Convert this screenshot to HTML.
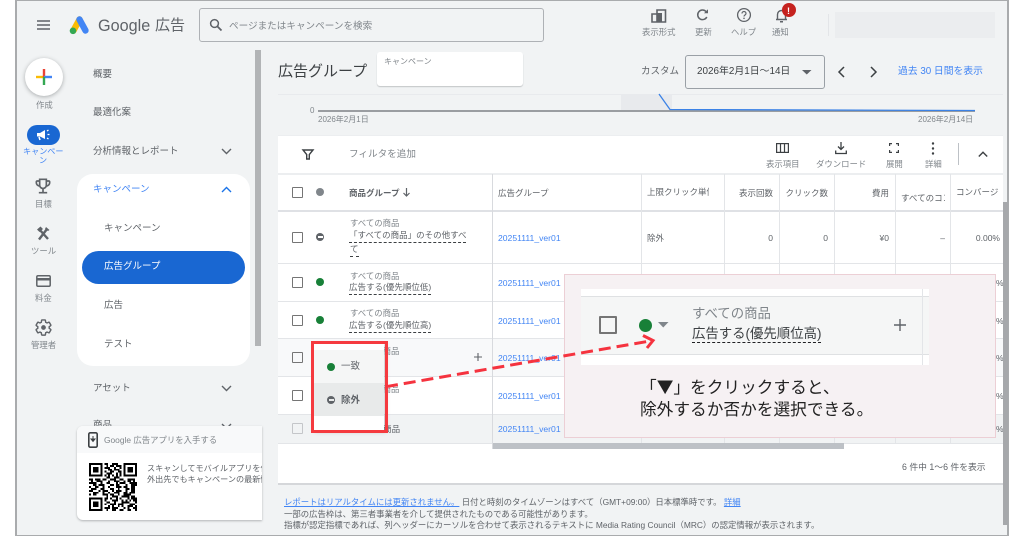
<!DOCTYPE html>
<html lang="ja"><head><meta charset="utf-8"><title>広告グループ</title>
<style>
html,body{margin:0;padding:0;background:#fff}
#r{position:relative;width:1024px;height:536px;overflow:hidden;background:#fff;font-family:"Liberation Sans","Noto Sans CJK JP",sans-serif;color:#5f6368;filter:blur(.3px)}
.t{position:absolute;white-space:nowrap;line-height:0;font-size:9.5px;margin-top:1px}
.b{position:absolute}
.s{font-size:8.4px;color:#80868b}
.l{color:#4285f4;font-size:8.6px;left:498px}
.cb{position:absolute;left:292px;width:9px;height:9px;border:1.5px solid #757575;border-radius:1px}
.d{position:absolute;left:316px;width:8px;height:8px;border-radius:50%;background:#188038}
.v{position:absolute;width:1px;background:#e3e5e8}
.h{position:absolute;left:278px;width:725px;height:1px;background:#e3e5e8}
.u{border-bottom:1px dashed #3c4043;padding-bottom:1px;line-height:11px;display:inline-block}
svg{position:absolute;overflow:visible}
</style></head><body><div id="r">
<!-- frame -->
<div class="b" style="left:16px;top:1px;width:991px;height:534px;background:#f1f3f4"></div>
<div class="b" style="left:15px;top:0;width:1.5px;height:536px;background:#a9abad"></div>
<div class="b" style="left:15px;top:0;width:993px;height:1px;background:#a9abad"></div>
<div class="b" style="left:15px;top:535px;width:993px;height:1px;background:#a9abad"></div>
<div class="b" style="left:1007px;top:0;width:1.5px;height:536px;background:#a9abad"></div>

<!-- top bar -->
<svg style="left:37px;top:20px" width="13" height="10"><path d="M0 1h13M0 5h13M0 9h13" stroke="#5f6368" stroke-width="1.4"/></svg>
<svg style="left:69px;top:15px" width="21" height="20"><path d="M4.500 15.500 10.500 4.500" stroke="#fbbc04" stroke-width="6.400" stroke-linecap="round"/><path d="M10.500 4.500 16.500 15.500" stroke="#4285f4" stroke-width="6.400" stroke-linecap="round"/><circle cx="4" cy="15.800" r="3.300" fill="#34a853"/></svg>
<div class="t" style="left:98px;top:24.500px;font-size:16.200px">Google</div>
<div class="t" style="left:155px;top:25px;font-size:15px">広告</div>
<div class="b" style="left:199px;top:8px;width:343px;height:32px;border:1px solid #aeb1b5;border-radius:3px"></div>
<svg style="left:209px;top:18px" width="14" height="14"><circle cx="5.500" cy="5.500" r="3.900" fill="none" stroke="#5f6368" stroke-width="1.500"/><path d="M8.500 8.500 12.500 12.500" stroke="#5f6368" stroke-width="1.800"/></svg>
<div class="t" style="left:229px;top:26px;font-size:9.600px;color:#80868b">ページまたはキャンペーンを検索</div>

<svg style="left:651px;top:8px" width="16" height="15"><path d="M1 6h5v8H1zM6 2h8.500v12H6z" fill="none" stroke="#5f6368" stroke-width="1.600"/><path d="M6 5h5v9H6z" fill="#5f6368"/></svg>
<svg style="left:697px;top:9px" width="12" height="12"><path d="M9.800 8A4.800 4.800 0 1 1 9 2.500" fill="none" stroke="#5f6368" stroke-width="1.500"/><path d="M7 4.200h4V.2z" fill="#5f6368"/></svg>
<svg style="left:737px;top:8px" width="14" height="14"><circle cx="7" cy="7" r="6.400" fill="none" stroke="#5f6368" stroke-width="1.300"/><path d="M5 5.500A2 2 0 0 1 9 5.500C9 7 7 7 7 8.500" fill="none" stroke="#5f6368" stroke-width="1.200"/><circle cx="7" cy="10.300" r=".8" fill="#5f6368"/></svg>
<svg style="left:775px;top:8px" width="13" height="15"><path d="M2.500 11V6.500A4 4 0 0 1 10.500 6.500V11M1 11.500h11" fill="none" stroke="#5f6368" stroke-width="1.400"/><path d="M5 13h3v1.500H5z" fill="#5f6368"/></svg>
<div class="b" style="left:782px;top:3px;width:14px;height:14px;border-radius:50%;background:#c5221f"></div>
<div class="t" style="left:787px;top:9.500px;font-size:9px;font-weight:bold;color:#fff">!</div>
<div class="t s" style="left:642px;top:30.500px">表示形式</div>
<div class="t s" style="left:695px;top:30.500px">更新</div>
<div class="t s" style="left:731px;top:30.500px">ヘルプ</div>
<div class="t s" style="left:772px;top:30.500px">通知</div>
<div class="b" style="left:828px;top:14px;width:1px;height:22px;background:#e3e5e8"></div>
<div class="b" style="left:835px;top:12px;width:160px;height:26px;background:#ebedef"></div>

<!-- left rail -->
<div class="b" style="left:25px;top:58px;width:38px;height:38px;border-radius:50%;background:#fff;box-shadow:0 1px 4px rgba(60,64,67,.4)"></div>
<svg style="left:35px;top:68px" width="18" height="18"><path d="M9 9H1" stroke="#fbbc04" stroke-width="2.400"/><path d="M9 1V9" stroke="#ea4335" stroke-width="2.400"/><path d="M9 9h8" stroke="#4285f4" stroke-width="2.400"/><path d="M9 9v8" stroke="#34a853" stroke-width="2.400"/></svg>
<div class="t s" style="left:36px;top:103.500px">作成</div>
<div class="b" style="left:27px;top:125px;width:33px;height:20px;border-radius:10px;background:#1967d2"></div>
<svg style="left:36px;top:128px" width="16" height="14"><path d="M1 5h3l5-3v9L4 8.500H1z" fill="#fff"/><path d="M3 9l1 3" stroke="#fff" stroke-width="1.500"/><path d="M11 3l1.500-1M11.500 6.500h2M11 10l1.500 1" stroke="#fff" stroke-width="1.300"/></svg>
<div class="t" style="left:23px;top:151px;font-size:8.100px;color:#4285f4">キャンペー</div>
<div class="t" style="left:39px;top:160px;font-size:8.100px;color:#4285f4">ン</div>
<svg style="left:33px;top:176px" width="20" height="20" viewBox="0 0 24 24"><path d="M19 5h-2V3H7v2H5c-1.100 0-2 .9-2 2v1c0 2.550 1.920 4.630 4.390 4.940.63 1.500 1.980 2.630 3.610 2.960V19H7v2h10v-2h-4v-3.100c1.630-.33 2.980-1.460 3.610-2.960C19.080 12.630 21 10.550 21 8V7c0-1.100-.9-2-2-2zM5 8V7h2v3.820C5.840 10.400 5 9.300 5 8zm14 0c0 1.300-.84 2.400-2 2.820V7h2v1zM9 5h6v6a3 3 0 0 1-6 0z" fill="#5f6368" fill-rule="evenodd"/></svg>
<div class="t s" style="left:35px;top:202.500px">目標</div>
<svg style="left:36px;top:226px" width="15" height="15"><path d="M3 13.500 11 3M3 3 12 13" stroke="#5f6368" stroke-width="2.400"/><path d="M1 3.500 4.500 .5 7 3 3.500 6zM10 1l3.500 3-1.500 1L9 3z" fill="#5f6368"/></svg>
<div class="t s" style="left:31px;top:249.500px">ツール</div>
<svg style="left:36px;top:274.500px" width="15" height="12"><rect x=".8" y=".8" width="13.400" height="10.400" rx="1.200" fill="none" stroke="#5f6368" stroke-width="1.500"/><path d="M1 3h13v2.500H1z" fill="#5f6368"/></svg>
<div class="t s" style="left:35px;top:296.500px">料金</div>
<svg style="left:33.500px;top:317.500px" width="19" height="19" viewBox="0 0 24 24"><path d="M19.140 12.940c.04-.3.06-.61.06-.94 0-.32-.02-.64-.07-.94l2.030-1.580c.18-.14.23-.41.12-.61l-1.920-3.320c-.12-.22-.37-.29-.59-.22l-2.390.96c-.5-.38-1.030-.7-1.620-.94l-.36-2.540c-.04-.24-.24-.41-.48-.41h-3.840c-.24 0-.43.17-.47.41l-.36 2.540c-.59.24-1.130.57-1.620.94l-2.390-.96c-.22-.08-.47 0-.59.22L2.740 8.870c-.12.21-.08.47.12.61l2.030 1.580c-.05.3-.09.63-.09.94s.02.64.07.94l-2.030 1.580c-.18.14-.23.41-.12.61l1.920 3.320c.12.22.37.29.59.22l2.390-.96c.5.38 1.030.7 1.620.94l.36 2.540c.05.24.24.41.48.41h3.840c.24 0 .44-.17.47-.41l.36-2.540c.59-.24 1.130-.56 1.620-.94l2.390.96c.22.08.47 0 .59-.22l1.920-3.320c.12-.22.07-.47-.12-.61l-2.010-1.580z" fill="none" stroke="#5f6368" stroke-width="1.800"/><circle cx="12" cy="12" r="3" fill="#5f6368"/></svg>
<div class="t s" style="left:31px;top:343.500px">管理者</div>

<!-- nav -->
<div class="t" style="left:93px;top:73.500px">概要</div>
<div class="t" style="left:93px;top:112px">最適化案</div>
<div class="t" style="left:93px;top:150.500px">分析情報とレポート</div>
<svg style="left:221px;top:148px" width="11" height="7"><path d="M1 1 5.500 5.500 10 1" fill="none" stroke="#5f6368" stroke-width="1.400"/></svg>
<div class="b" style="left:77px;top:174px;width:173px;height:192px;border-radius:16px;background:#fff"></div>
<div class="t" style="left:93px;top:189px;color:#4285f4">キャンペーン</div>
<svg style="left:221px;top:186px" width="11" height="7"><path d="M1 6 5.500 1.500 10 6" fill="none" stroke="#1a73e8" stroke-width="1.400"/></svg>
<div class="t" style="left:104px;top:227.500px">キャンペーン</div>
<div class="b" style="left:82px;top:251px;width:163px;height:33px;border-radius:16.500px;background:#1967d2"></div>
<div class="t" style="left:104px;top:266px;color:#fff">広告グループ</div>
<div class="t" style="left:104px;top:305px">広告</div>
<div class="t" style="left:104px;top:343.500px">テスト</div>
<div class="t" style="left:93px;top:387.500px">アセット</div>
<svg style="left:221px;top:385px" width="11" height="7"><path d="M1 1 5.500 5.500 10 1" fill="none" stroke="#5f6368" stroke-width="1.400"/></svg>
<div class="t" style="left:93px;top:425px">商品</div>
<svg style="left:221px;top:423px" width="11" height="7"><path d="M1 1 5.500 5.500 10 1" fill="none" stroke="#5f6368" stroke-width="1.400"/></svg>
<div class="b" style="left:255px;top:50px;width:6px;height:296px;background:#b2b4b6"></div>

<!-- app card -->
<div class="b" style="left:77px;top:426px;width:185px;height:94px;background:#fff;border-radius:6px 0 0 6px;box-shadow:0 1px 2px rgba(60,64,67,.35);overflow:hidden">
  <div class="b" style="left:0;top:0;width:185px;height:27px;background:#f8f9fa"></div>
  <div class="t" style="left:27px;top:13px;font-size:8.400px;color:#80868b">Google 広告アプリを入手する</div>
  <div class="t" style="left:70px;top:42px;font-size:8.150px">スキャンしてモバイルアプリを使えば</div>
  <div class="t" style="left:70px;top:53px;font-size:8.150px">外出先でもキャンペーンの最新情報を</div>
</div>
<svg style="left:88px;top:432px" width="10" height="16"><rect x=".8" y=".8" width="8.400" height="14.400" rx="1.500" fill="none" stroke="#3c4043" stroke-width="1.600"/><path d="M5 4v4M3 7l2 2.500L7 7z" stroke="#3c4043" fill="#3c4043"/></svg>
<svg style="left:89px;top:463px" width="48" height="48" viewBox="0 0 25 25" shape-rendering="crispEdges">
<path fill-rule="evenodd" d="M0 0h7v7H0zM1 1v5h5V1zM2 2h3v3H2zM18 0h7v7h-7zM19 1v5h5V1zM20 2h3v3h-3zM0 18h7v7H0zM1 19v5h5v-5zM2 20h3v3H2z"/>
<path stroke="#000" stroke-width="1" fill="none" d="M8 .5h2m2 0h3M9 1.500h1m1 0h2m1 0h3M8 2.500h3m2 0h1m2 0h1M10 3.500h2m1 0h3M8 4.500h1m2 0h2m2 0h2M9 5.500h3m2 0h1m1 0h1M8 6.500h1m1 0h1m1 0h1m1 0h1m1 0h1M9 7.500h2m2 0h3M0 8.500h2m1 0h3m1 0h2m2 0h3m2 0h2m2 0h4M1 9.500h1m2 0h3m3 0h1m2 0h3m2 0h1m1 0h2m1 0h1M0 10.500h4m2 0h1m2 0h2m3 0h1m1 0h3m2 0h4M2 11.500h2m1 0h3m3 0h2m1 0h2m3 0h1m2 0h3M0 12.500h1m2 0h2m2 0h1m2 0h1m3 0h3m1 0h2m2 0h2M1 13.500h3m2 0h2m3 0h2m2 0h1m3 0h2m1 0h2M0 14.500h2m3 0h1m1 0h3m2 0h1m1 0h3m2 0h1m2 0h2M2 15.500h3m2 0h1m2 0h1m2 0h3m2 0h2m1 0h3M0 16.500h1m1 0h2m3 0h3m1 0h2m2 0h1m2 0h4M9 17.500h1m2 0h3m2 0h4m1 0h2M8 18.500h2m1 0h1m2 0h1m1 0h1m3 0h1m1 0h3M8 19.500h1m3 0h3m2 0h1m1 0h1m1 0h1m1 0h2M9 20.500h2m2 0h1m3 0h4m3 0h1M8 21.500h1m2 0h3m1 0h3m3 0h3M10 22.500h1m1 0h1m2 0h1m1 0h1m2 0h3m1 0h1M8 23.500h3m1 0h3m3 0h1m1 0h1m2 0h2M9 24.500h1m2 0h2m2 0h2m2 0h2m2 0h1"/></svg>

<!-- page head -->
<div class="t" style="left:278px;top:70.500px;font-size:15px;color:#3c4043">広告グループ</div>
<div class="b" style="left:377px;top:52px;width:146px;height:34px;background:#fff;border-radius:3px;box-shadow:0 1px 1px rgba(60,64,67,.25)"></div>
<div class="t" style="left:384px;top:60.500px;font-size:8px;color:#80868b">キャンペーン</div>
<div class="t" style="left:641px;top:71px">カスタム</div>
<div class="b" style="left:685px;top:55px;width:138px;height:32px;border:1px solid #9aa0a6;border-radius:3px"></div>
<div class="t" style="left:697px;top:71px;font-size:9.900px;color:#3c4043">2026年2月1日〜14日</div>
<svg style="left:802px;top:70px" width="10" height="5"><path d="M0 0h9.500L4.750 4.500z" fill="#5f6368"/></svg>
<svg style="left:837px;top:66px" width="8" height="12"><path d="M7 1 2 6l5 5" fill="none" stroke="#3c4043" stroke-width="1.500"/></svg>
<svg style="left:870px;top:66px" width="8" height="12"><path d="M1 1l5 5-5 5" fill="none" stroke="#3c4043" stroke-width="1.500"/></svg>
<div class="t" style="left:898px;top:71px;font-size:9.800px;color:#4285f4">過去 30 日間を表示</div>

<!-- chart -->
<div class="h" style="top:94px;background:#e8eaed"></div>
<div class="b" style="left:621px;top:95px;width:51px;height:15px;background:#e8eaed"></div>
<div class="b" style="left:318px;top:110px;width:657px;height:1.500px;background:#9a9da1"></div>
<svg style="left:655px;top:94px" width="325" height="20"><path d="M4 0 15 15.500 320 16.500" fill="none" stroke="#3b82e6" stroke-width="1.300"/></svg>
<div class="t" style="left:310px;top:110px;font-size:8px;color:#80868b">0</div>
<div class="t" style="left:318px;top:119px;font-size:8px;color:#80868b">2026年2月1日</div>
<div class="t" style="left:918px;top:119px;font-size:8px;color:#80868b">2026年2月14日</div>

<!-- table card -->
<div class="b" style="left:278px;top:135px;width:725px;height:348px;background:#fff"></div>
<div class="h" style="top:135px;background:#eceef0"></div>
<div class="b" style="left:278px;top:173px;width:725px;height:1.500px;background:#eceef0"></div>
<svg style="left:302px;top:149px" width="12" height="11"><path d="M1 1h10L7.300 5.500V10H4.700V5.500z" fill="none" stroke="#3c4043" stroke-width="1.400"/></svg>
<div class="t" style="left:349px;top:154px;font-size:9.600px;color:#80868b">フィルタを追加</div>
<svg style="left:776px;top:143px" width="13" height="10"><rect x=".6" y=".6" width="11.800" height="8.800" fill="none" stroke="#3c4043" stroke-width="1.200"/><path d="M4.500 1v8M8.500 1v8" stroke="#3c4043" stroke-width="1.200"/></svg>
<svg style="left:835px;top:142px" width="12" height="13"><path d="M6 0v7M3 4.500 6 7.500 9 4.500" fill="none" stroke="#3c4043" stroke-width="1.300"/><path d="M.7 8.500v3h10.600v-3" fill="none" stroke="#3c4043" stroke-width="1.300"/></svg>
<svg style="left:889px;top:143px" width="10" height="10"><path d="M.6 3V.6H3M7 .6h2.400V3M.6 7v2.400H3M7 9.400h2.400V7" fill="none" stroke="#3c4043" stroke-width="1.200"/></svg>
<svg style="left:931px;top:142px" width="4" height="13"><circle cx="2" cy="1.500" r="1.200" fill="#3c4043"/><circle cx="2" cy="6.500" r="1.200" fill="#3c4043"/><circle cx="2" cy="11.500" r="1.200" fill="#3c4043"/></svg>
<div class="b" style="left:958px;top:143px;width:1px;height:22px;background:#bdc1c6"></div>
<svg style="left:978px;top:151px" width="10" height="7"><path d="M.8 5.500 5 1.300 9.200 5.500" fill="none" stroke="#3c4043" stroke-width="1.400"/></svg>
<div class="t s" style="left:766px;top:163px">表示項目</div>
<div class="t s" style="left:816px;top:163px">ダウンロード</div>
<div class="t s" style="left:886px;top:163px">展開</div>
<div class="t s" style="left:925px;top:163px">詳細</div>

<!-- rows bg -->
<div class="b" style="left:278px;top:338px;width:725px;height:38px;background:#f8f9fa"></div>
<div class="b" style="left:278px;top:414px;width:725px;height:29px;background:#f1f3f4"></div>
<div class="b" style="left:278px;top:210px;width:725px;height:1.500px;background:#dfe1e5"></div>
<div class="h" style="top:263px"></div><div class="h" style="top:301px"></div><div class="h" style="top:338px"></div><div class="h" style="top:376px"></div><div class="h" style="top:414px"></div><div class="h" style="top:443px"></div>
<div class="v" style="left:492px;top:174px;height:275px;background:#d8dade"></div>
<div class="v" style="left:641px;top:174px;height:269px"></div><div class="v" style="left:724px;top:174px;height:269px"></div><div class="v" style="left:779px;top:174px;height:269px"></div><div class="v" style="left:834px;top:174px;height:269px"></div><div class="v" style="left:895px;top:174px;height:269px"></div><div class="v" style="left:950px;top:174px;height:269px"></div>

<!-- header -->
<div class="cb" style="top:187px"></div>
<div class="d" style="top:188px;background:#80868b"></div>
<div class="t" style="left:349px;top:191.500px;font-size:8.500px;font-weight:bold;color:#5f6368">商品グループ</div>
<svg style="left:402px;top:187px" width="9" height="10"><path d="M4.500 1v8M1.500 6 4.500 9 7.500 6" fill="none" stroke="#5f6368" stroke-width="1.200"/></svg>
<div class="t" style="left:498px;top:191.500px;font-size:8.500px">広告グループ</div>
<div class="t" style="left:647px;top:192px;font-size:8.500px;width:62px;height:12px;line-height:12px;margin-top:-6px;overflow:hidden">上限クリック単価</div>
<div class="t" style="right:251px;top:191.500px;font-size:8.500px">表示回数</div>
<div class="t" style="right:196px;top:191.500px;font-size:8.500px">クリック数</div>
<div class="t" style="right:135px;top:191.500px;font-size:8.500px">費用</div>
<div class="t" style="left:901px;top:198px;font-size:8.500px;width:44px;height:12px;line-height:12px;margin-top:-6px;overflow:hidden">すべてのコンバ</div>
<div class="t" style="left:956px;top:192px;font-size:8.500px;width:44px;height:12px;line-height:12px;margin-top:-6px;overflow:hidden">コンバージョン</div>

<!-- rows -->
<div class="cb" style="top:232px"></div>
<div class="d" style="top:233px;background:#5f6368"></div><div class="b" style="left:317.500px;top:236.300px;width:5px;height:1.500px;background:#fff"></div>
<div class="t s" style="left:350px;top:221.500px">すべての商品</div>
<div class="b" style="left:349px;top:229.500px;font-size:8.500px;white-space:nowrap;color:#5f6368"><span class="u">「すべての商品」のその他すべ</span></div>
<div class="b" style="left:350px;top:244px;font-size:8.500px;color:#5f6368"><span class="u">て</span></div>
<div class="t l" style="top:236.500px">20251111_ver01</div>
<div class="t" style="left:647px;top:236.500px;font-size:8.500px">除外</div>
<div class="t" style="right:251px;top:236.500px;font-size:8.500px">0</div>
<div class="t" style="right:196px;top:236.500px;font-size:8.500px">0</div>
<div class="t" style="right:135px;top:236.500px;font-size:8.500px">¥0</div>
<div class="t" style="right:79px;top:236.500px;font-size:8.500px">–</div>
<div class="t" style="right:24px;top:236.500px;font-size:8.500px">0.00%</div>

<div class="cb" style="top:277px"></div><div class="d" style="top:278px"></div>
<div class="t s" style="left:350px;top:274.500px">すべての商品</div>
<div class="b" style="left:349px;top:282px;font-size:8.500px;white-space:nowrap"><span class="u">広告する(優先順位低)</span></div>
<div class="t l" style="top:281.500px">20251111_ver01</div>

<div class="cb" style="top:315px"></div><div class="d" style="top:316px"></div>
<div class="t s" style="left:350px;top:311.500px">すべての商品</div>
<div class="b" style="left:349px;top:320px;font-size:8.500px;white-space:nowrap"><span class="u">広告する(優先順位高)</span></div>
<div class="t l" style="top:319.500px">20251111_ver01</div>

<div class="cb" style="top:352px"></div>
<div class="t s" style="left:350px;top:349.500px">すべての商品</div>
<svg style="left:473px;top:352px" width="10" height="10"><path d="M5 1v8M1 5h8" stroke="#5f6368" stroke-width="1.100"/></svg>
<div class="t l" style="top:356.500px">20251111_ver01</div>

<div class="cb" style="top:390px"></div>
<div class="t s" style="left:350px;top:387.500px">すべての商品</div>
<div class="t l" style="top:394.500px">20251111_ver01</div>

<div class="cb" style="top:423px;border-color:#c4c6c9"></div>
<div class="t" style="left:350px;top:427.500px;font-size:8.500px">すべての商品</div>
<div class="t l" style="top:427.500px">20251111_ver01</div>

<div class="t" style="left:996px;top:281.500px;font-size:8.500px">%</div>
<div class="t" style="left:996px;top:319.500px;font-size:8.500px">%</div>
<div class="t" style="left:996px;top:356.500px;font-size:8.500px">%</div>
<div class="t" style="left:996px;top:394.500px;font-size:8.500px">%</div>
<div class="t" style="left:996px;top:427.500px;font-size:8.500px">%</div>

<!-- h scroll / footer -->
<div class="b" style="left:493px;top:443px;width:351px;height:6px;background:#bdc1c6"></div>
<div class="t" style="left:902px;top:465.500px;font-size:8.800px">6 件中 1〜6 件を表示</div>
<div class="b" style="left:278px;top:483px;width:725px;height:1.500px;background:#d5d7da"></div>
<div class="b" style="left:1003px;top:202px;width:4.500px;height:323px;background:#a6a8ab"></div>
<div class="t" style="left:284px;top:501px;font-size:8.400px"><span style="color:#4285f4;text-decoration:underline">レポートはリアルタイムには更新されません。</span> 日付と時刻のタイムゾーンはすべて（GMT+09:00）日本標準時です。 <span style="color:#4285f4;text-decoration:underline">詳細</span></div>
<div class="t" style="left:284px;top:512.500px;font-size:8.400px">一部の広告枠は、第三者事業者を介して提供されたものである可能性があります。</div>
<div class="t" style="left:284px;top:523.500px;font-size:8.400px">指標が認定指標であれば、列ヘッダーにカーソルを合わせて表示されるテキストに Media Rating Council（MRC）の認定情報が表示されます。</div>

<!-- popup -->
<div class="b" style="left:313px;top:343px;width:71px;height:88px;background:#fff;box-shadow:2px 1px 4px rgba(60,64,67,.25)"></div>
<div class="b" style="left:313px;top:350px;width:71px;height:33px;background:#f5f6f6"></div>
<div class="b" style="left:313px;top:383px;width:71px;height:33px;background:#e8eaea"></div>
<div class="d" style="left:327px;top:362.500px;width:8px;height:8px"></div>
<div class="d" style="left:327px;top:396px;width:8px;height:8px;background:#5f6368"></div><div class="b" style="left:328.500px;top:399.300px;width:5px;height:1.500px;background:#e8eaea"></div>
<div class="t" style="left:341px;top:366px">一致</div>
<div class="t" style="left:341px;top:399.500px;font-weight:bold">除外</div>
<div class="b" style="left:311px;top:340.500px;width:70.500px;height:86.500px;border:3px solid #f53a3f"></div>

<!-- annotation -->
<div class="b" style="left:563.500px;top:273.500px;width:430.500px;height:162.500px;background:#f6f1f3;border:1px solid #eccfd5"></div>
<div class="b" style="left:581px;top:289px;width:348px;height:76px;background:#fff"></div>
<div class="b" style="left:581px;top:296px;width:348px;height:59px;background:#f5f6f6;border-top:1px solid #dfe1e3;border-bottom:1px solid #dfe1e3;box-sizing:border-box"></div>
<div class="b" style="left:922px;top:289px;width:1px;height:76px;background:#e3e5e8"></div>
<div class="b" style="left:598.500px;top:316px;width:14px;height:14px;border:2px solid #757575;border-radius:1px"></div>
<div class="b" style="left:638.500px;top:318.500px;width:13px;height:13px;border-radius:50%;background:#188038"></div>
<svg style="left:658px;top:322px" width="11" height="6"><path d="M0 0h10.500L5.250 5.500z" fill="#80868b"/></svg>
<div class="t" style="left:692px;top:312.500px;font-size:13.400px;color:#80868b">すべての商品</div>
<div class="b" style="left:692px;top:326px;font-size:13.400px;white-space:nowrap;color:#3c4043"><span style="border-bottom:1.200px dashed #202124;display:inline-block;line-height:15.500px;padding-bottom:0">広告する(優先順位高)</span></div>
<svg style="left:894px;top:319px" width="12" height="12"><path d="M6 0v12M0 6h12" stroke="#5f6368" stroke-width="1.400"/></svg>
<div class="t" style="left:640px;top:384.500px;font-size:16.700px;color:#222">「<span style="font-family:'Noto Sans CJK JP',sans-serif">▼</span>」をクリックすると、</div>
<div class="t" style="left:640px;top:409px;font-size:16.700px;color:#222">除外するか否かを選択できる。</div>

<!-- arrow -->
<svg style="left:0;top:0" width="1024" height="536"><path d="M386 386.700 650 341" fill="none" stroke="#f5333f" stroke-width="3" stroke-dasharray="12 6"/><path d="M643 335.500 653 340.500 647 348" fill="none" stroke="#f5333f" stroke-width="3"/></svg>
</div></body></html>
